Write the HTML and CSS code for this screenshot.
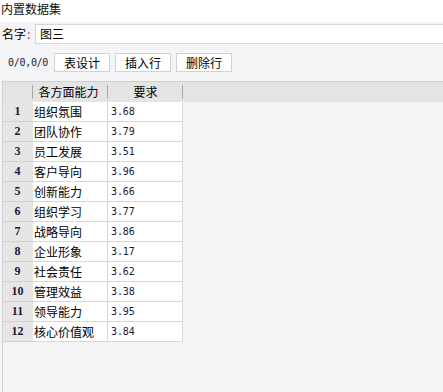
FILE: index.html
```html
<!DOCTYPE html>
<html>
<head>
<meta charset="utf-8">
<link rel="stylesheet" href="styles.css">
</head>
<body>
<div class="app">
  <div class="title">内置数据集</div>
  <div class="name-row">
    <span class="label">名字<span class="colon">:</span></span>
    <div class="input">图三</div>
  </div>
  <div class="toolbar">
    <span class="pos">0/0,0/0</span>
    <button class="btn">表设计</button>
    <button class="btn">插入行</button>
    <button class="btn">删除行</button>
  </div>
  <div class="grid-area">
    <div class="head">
      <div class="hcell num"></div>
      <div class="hcell c1">各方面能力</div>
      <div class="hcell c2">要求</div>
    </div>
    <div class="row"><div class="cell num">1</div><div class="cell c1">组织氛围</div><div class="cell c2 val">3.68</div></div>
    <div class="row"><div class="cell num">2</div><div class="cell c1">团队协作</div><div class="cell c2 val">3.79</div></div>
    <div class="row"><div class="cell num">3</div><div class="cell c1">员工发展</div><div class="cell c2 val">3.51</div></div>
    <div class="row"><div class="cell num">4</div><div class="cell c1">客户导向</div><div class="cell c2 val">3.96</div></div>
    <div class="row"><div class="cell num">5</div><div class="cell c1">创新能力</div><div class="cell c2 val">3.66</div></div>
    <div class="row"><div class="cell num">6</div><div class="cell c1">组织学习</div><div class="cell c2 val">3.77</div></div>
    <div class="row"><div class="cell num">7</div><div class="cell c1">战略导向</div><div class="cell c2 val">3.86</div></div>
    <div class="row"><div class="cell num">8</div><div class="cell c1">企业形象</div><div class="cell c2 val">3.17</div></div>
    <div class="row"><div class="cell num">9</div><div class="cell c1">社会责任</div><div class="cell c2 val">3.62</div></div>
    <div class="row"><div class="cell num">10</div><div class="cell c1">管理效益</div><div class="cell c2 val">3.38</div></div>
    <div class="row"><div class="cell num">11</div><div class="cell c1">领导能力</div><div class="cell c2 val">3.95</div></div>
    <div class="row"><div class="cell num">12</div><div class="cell c1">核心价值观</div><div class="cell c2 val">3.84</div></div>
  </div>
</div>
</body>
</html>
```
FILE: styles.css
```css
html, body {
  margin: 0;
  padding: 0;
  height: 100%;
  background: #f4f4f6;
  font-family: "Noto Sans CJK SC", "Microsoft YaHei", sans-serif;
  font-size: 12px;
  color: #000;
  overflow: hidden;
}
.app {
  display: flex;
  flex-direction: column;
  height: 392px;
}
.title {
  height: 22px;
  background: #fff;
  line-height: 18px;
  padding-left: 1px;
  color: #111;
}
.name-row {
  display: flex;
  align-items: stretch;
  padding-top: 2px;
  height: 20px;
}
.label {
  width: 33px;
  padding-left: 2px;
  line-height: 20px;
}
.colon {
  color: #7d3c98;
  margin-left: 1px;
}
.input {
  flex: 1;
  background: #fff;
  border-top: 1px solid #d6d6d8;
  border-bottom: 1px solid #d6d6d8;
  border-left: 1px solid #d6d6d8;
  padding-left: 4px;
  line-height: 18px;
}
.toolbar {
  display: flex;
  align-items: flex-start;
  height: 37px;
  box-sizing: border-box;
  padding: 9px 0 0 8px;
}
.pos {
  width: 46px;
  font-family: "DejaVu Sans Mono", monospace;
  font-size: 10px;
  line-height: 19px;
  color: #1a1a33;
  letter-spacing: -0.3px;
}
.btn {
  width: 56px;
  height: 19px;
  margin: 0 5px 0 0;
  padding: 0;
  background: #fff;
  border: 1px solid #d2d2d4;
  font-family: "Noto Sans CJK SC", sans-serif;
  font-size: 12px;
  line-height: 16px;
  color: #000;
}
.grid-area {
  flex: 1;
  margin-left: 2px;
  border-left: 1px solid #d0d0d2;
  border-top: 1px solid #d0d0d2;
}
.head {
  display: flex;
  height: 20px;
  background: #e4e4e4;
}
.hcell {
  box-sizing: border-box;
  height: 20px;
  line-height: 20px;
  text-align: center;
  position: relative;
}
.hcell::after {
  content: "";
  position: absolute;
  right: 0;
  top: 3px;
  height: 14px;
  width: 1px;
  background: #a9a9a9;
}
.num { width: 30px; }
.c1 { width: 75px; }
.c2 { width: 75px; }
.hcell.c1 { padding-right: 4px; }
.row {
  display: flex;
  height: 20px;
}
.cell {
  box-sizing: border-box;
  height: 20px;
  border-right: 1px solid #d8d8d8;
  border-bottom: 1px solid #d8d8d8;
  background: #fff;
  line-height: 19px;
  white-space: nowrap;
}
.cell.num {
  background: #e6e6e6;
  border-right: none;
  border-bottom-color: #d0d0d0;
  text-align: center;
  font-family: "Liberation Serif", serif;
  font-size: 12px;
  font-weight: bold;
  color: #1a1a33;
  padding-right: 1px;
}
.cell.c1 {
  padding-left: 1px;
}
.cell.val {
  padding-left: 3px;
  font-family: "DejaVu Sans Mono", monospace;
  font-size: 10px;
  color: #1a1a33;
  letter-spacing: -0.1px;
}
```
